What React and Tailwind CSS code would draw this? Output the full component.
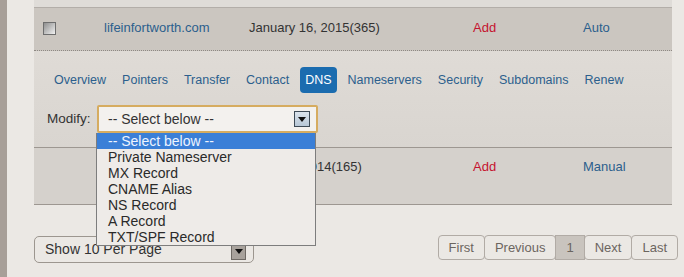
import React from "react";

const tabs = ["Overview", "Pointers", "Transfer", "Contact", "DNS", "Nameservers", "Security", "Subdomains", "Renew"];
const options = ["-- Select below --", "Private Nameserver", "MX Record", "CNAME Alias", "NS Record", "A Record", "TXT/SPF Record"];
const pages = ["First", "Previous", "1", "Next", "Last"];

const Caret = () => (
  <svg width="8" height="5" viewBox="0 0 8 5">
    <path d="M0 0H8L4 5Z" fill="#111" />
  </svg>
);

export default function App() {
  return (
    <div className="flex w-[684px] h-[277px] overflow-hidden font-['Liberation_Sans',Arial,sans-serif] text-[13px] text-[#333]">
      <div className="w-[7px] bg-[#a79f98]" />
      <div className="flex-1 bg-[#ebe8e4] pl-[27px]">
        <div className="w-[638px]">
          {/* previous row edge */}
          <div className="h-[8px] bg-[#dfdcd8] border-b border-[#b3aea9]" />

          {/* row 1 */}
          <div className="grid grid-cols-[70px_145px_224px_110px_1fr] items-center h-[43px] pb-[2px] bg-[#cbc6c0] border-b border-dotted border-[#8e8984]">
            <div className="pl-[9px]">
              <div className="w-[13px] h-[13px] border border-[#6e6e6e] bg-gradient-to-br from-[#8f8f8f] to-[#f2f2f2]" />
            </div>
            <span className="text-[#2c5f8d]">lifeinfortworth.com</span>
            <span>January 16, 2015(365)</span>
            <span className="text-[#c5122f]">Add</span>
            <span className="text-[#2c5f8d]">Auto</span>
          </div>

          {/* expanded panel */}
          <div className="h-[96px] bg-gradient-to-b from-[#dfdbd6] to-[#d9d5d0] pt-[16px] pl-[12px]">
            <div className="flex items-center h-[26px] text-[12.5px]">
              {tabs.map((t) =>
                t === "DNS" ? (
                  <span key={t} className="mx-[3px] px-[5px] h-[26px] flex items-center rounded-[4px] bg-[#1b6caf] text-white">
                    {t}
                  </span>
                ) : (
                  <span key={t} className="px-2 text-[#2c5f8d]">
                    {t}
                  </span>
                )
              )}
            </div>
            <div className="flex items-center mt-[12px] pl-[1px]">
              <span className="text-[13.5px] w-[50px]">Modify:</span>
              <div className="relative">
                <div className="flex items-center justify-between w-[221px] h-[28px] border-2 border-[#d6ac60] rounded-[2px] bg-[#f3f1ee] pl-[9px] pr-[6px] text-[14px]">
                  <span>-- Select below --</span>
                  <div className="w-[16px] h-[16px] border border-[#3d4a55] bg-gradient-to-b from-[#dbe4ec] to-[#b7c7d6] flex items-center justify-center">
                    <Caret />
                  </div>
                </div>
                <ul className="absolute z-10 left-[-1px] top-full w-[220px] bg-[#eeebe8] border border-t-0 border-[#7d7d7d] text-[14px]">
                  {options.map((o, i) => (
                    <li
                      key={o}
                      className={
                        i === 0
                          ? "h-[16px] leading-[16px] pl-[11px] bg-[#3a7fd7] text-[#eef4ff]"
                          : "h-[16px] leading-[16px] pl-[11px] text-[#2a2a2a]"
                      }
                    >
                      {o}
                    </li>
                  ))}
                </ul>
              </div>
            </div>
          </div>

          {/* row 2 */}
          <div className="grid grid-cols-[70px_145px_224px_110px_1fr] items-start h-[58px] bg-[#d5d1cc] border-y border-[#9d9791] pt-[9px]">
            <span />
            <span />
            <span>June 30, 2014(165)</span>
            <span className="text-[#c5122f]">Add</span>
            <span className="text-[#2c5f8d]">Manual</span>
          </div>
        </div>

        {/* footer controls */}
        <div className="flex items-start justify-between w-[644px] mt-[30px]">
          <div className="flex items-center justify-between w-[220px] h-[27px] mt-[1px] border border-[#9c968f] rounded-[5px] pl-[10px] pr-[7px] text-[14px]">
            <span>Show 10 Per Page</span>
            <div className="w-[15px] h-[16px] mt-[4px] border border-[#6f6a65] bg-[#a8a29c] flex items-center justify-center">
              <Caret />
            </div>
          </div>
          <div className="flex h-[25px]">
            {pages.map((p) => (
              <span
                key={p}
                className={
                  p === "1"
                    ? "-ml-px px-[10px] flex items-center border border-[#b1aba5] bg-[#c9c4be] text-[#6b655f]"
                    : "-ml-px first:ml-0 px-[10px] flex items-center border border-[#b1aba5] rounded-[4px] text-[#6b655f]"
                }
              >
                {p}
              </span>
            ))}
          </div>
        </div>
      </div>
    </div>
  );
}
